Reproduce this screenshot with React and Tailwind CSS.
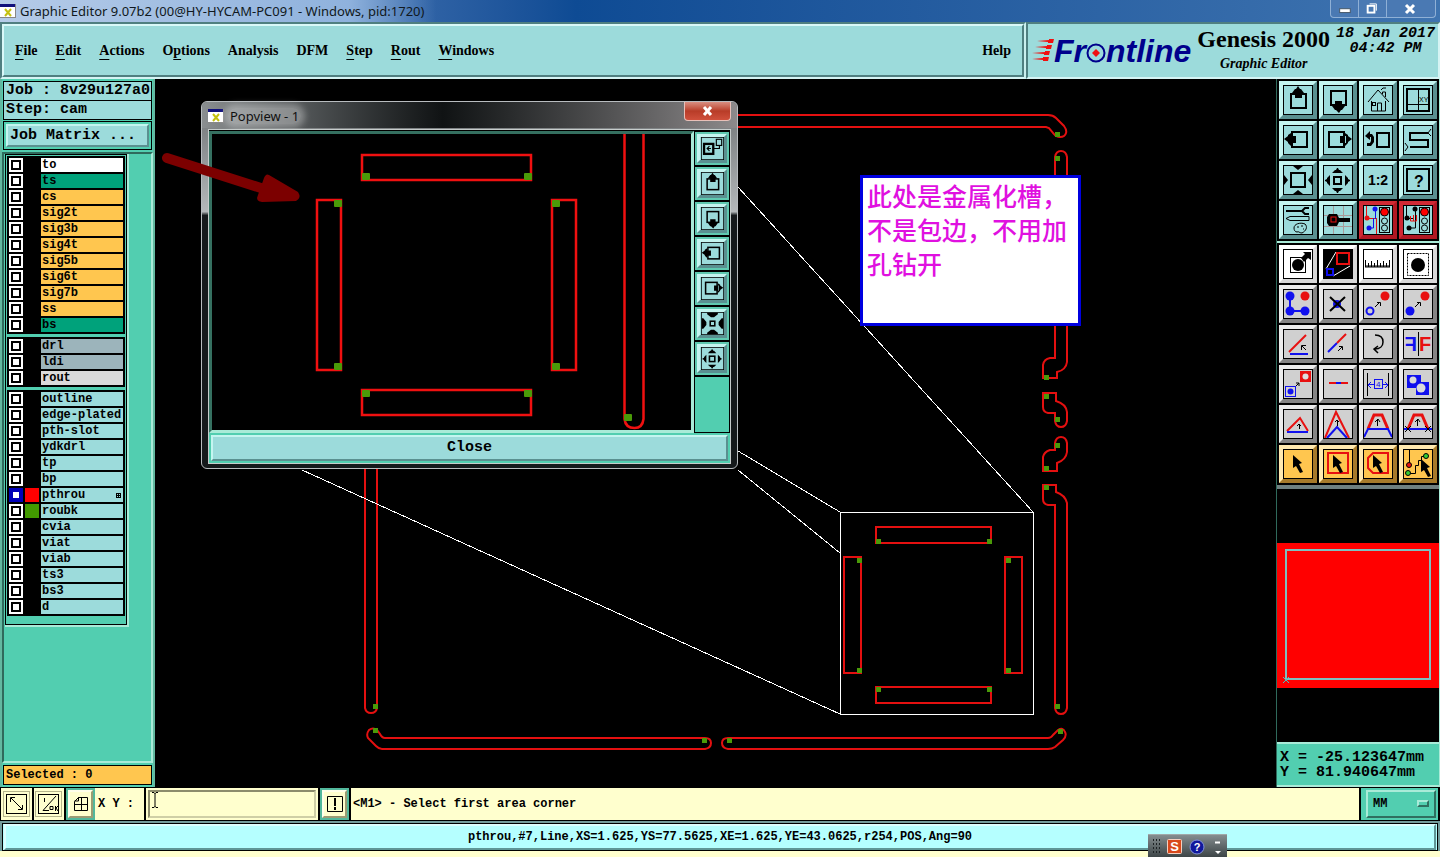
import React, { useState } from "react";

const MONO = "font-['Liberation_Mono',monospace] font-bold";
const SERIF = "font-['Liberation_Serif',serif] font-bold";
const SANS = "font-['Noto_Sans',sans-serif]";

const raisedAqua =
  "bg-[#9cdbdb] border-t-[#c4f5f0] border-l-[#c4f5f0] border-b-[#5a9090] border-r-[#5a9090]";
const raisedTeal =
  "bg-[#52ceb0] border-t-[#a9ebd8] border-l-[#a9ebd8] border-b-[#2f6f60] border-r-[#2f6f60]";

const menus = [
  ["", "F", "ile"],
  ["", "E", "dit"],
  ["", "A", "ctions"],
  ["O", "p", "tions"],
  ["Analysis", "", ""],
  ["DFM", "", ""],
  ["", "S", "tep"],
  ["", "R", "out"],
  ["", "W", "indows"],
];

const orange = "bg-[#ffc64f]";
const green = "bg-[#00a27b]";
const aqua = "bg-[#9cdbdb]";
const steel = "bg-[#9cb4bb]";

const layerGroups = [
  [
    { name: "to", color: "bg-white" },
    { name: "ts", color: green },
    { name: "cs", color: orange },
    { name: "sig2t", color: orange },
    { name: "sig3b", color: orange },
    { name: "sig4t", color: orange },
    { name: "sig5b", color: orange },
    { name: "sig6t", color: orange },
    { name: "sig7b", color: orange },
    { name: "ss", color: orange },
    { name: "bs", color: green },
  ],
  [
    { name: "drl", color: steel },
    { name: "ldi", color: steel },
    { name: "rout", color: "bg-[#dadada]" },
  ],
  [
    { name: "outline", color: aqua },
    { name: "edge-plated", color: aqua },
    { name: "pth-slot", color: aqua },
    { name: "ydkdrl", color: aqua },
    { name: "tp", color: aqua },
    { name: "bp", color: aqua },
    { name: "pthrou", color: aqua, swatch: "bg-[#ff0000]", active: true },
    { name: "roubk", color: aqua, swatch: "bg-[#429a00]" },
    { name: "cvia", color: aqua },
    { name: "viat", color: aqua },
    { name: "viab", color: aqua },
    { name: "ts3", color: aqua },
    { name: "bs3", color: aqua },
    { name: "d", color: aqua },
  ],
];

const RED = "#e81010";
const BLUE = "#1010ee";
const cursor = "10,6 19,14 16,15 20,23 17,24 13,17 10,19";

// every icon is drawn on a 30 x 30 grid
const icons = {
  up: (
    <>
      <rect x="8" y="9" width="15" height="14" fill="none" stroke="#000" strokeWidth="2" />
      <path d="M15 1l2 3h1l3 4H9l3-4h1zM12 7h7v6h-7z" />
    </>
  ),
  down: (
    <>
      <rect x="8" y="6" width="15" height="14" fill="none" stroke="#000" strokeWidth="2" />
      <path d="M12 16h7v6h-7zM9 21h13l-3 4h-1l-2 3-3-3h-1z" />
    </>
  ),
  left: (
    <>
      <rect x="9" y="7" width="15" height="15" fill="none" stroke="#000" strokeWidth="2" />
      <path d="M7 11h6v7H7zM8 8v13l-3-3v-1l-4-3 4-3v-1z" />
    </>
  ),
  right: (
    <>
      <rect x="6" y="7" width="15" height="15" fill="none" stroke="#000" strokeWidth="2" />
      <path d="M17 11h6v7h-6zM22 8v13l3-3v-1l4-3-4-3v-1z" />
    </>
  ),
  home: (
    <g fill="none" stroke="#000">
      <path d="M5 17L15 5l11 12M8.500 16v10h14V16M14.500 26v-8h4v8M19.500 9V7h3v5M18 5l2-2h3" />
      <rect x="9.500" y="17.500" width="3" height="3" />
    </g>
  ),
  coords: (
    <>
      <rect x="4" y="4" width="22" height="22" fill="none" stroke="#000" strokeWidth="2" />
      <path d="M15.500 3v24M3 19.500h24" fill="none" stroke="#000" />
      <text x="16" y="17" fontSize="7" fontFamily="Liberation Sans, sans-serif">XY</text>
    </>
  ),
  undo: (
    <>
      <rect x="14" y="8" width="12" height="14" fill="none" stroke="#000" strokeWidth="2" />
      <path d="M2 11l5-5v3h2l2 3v5l-3 4H4v-3h3l1-2v-4H7v3z" />
    </>
  ),
  serpentine: (
    <g fill="none" stroke="#000">
      <path d="M25 8H7v7h18v7H7" strokeWidth="2" />
      <path d="M28 4l-3 4 3 3M2 18l3 4-3 4" />
    </g>
  ),
  fit: (
    <>
      <rect x="8" y="8" width="14" height="14" fill="none" stroke="#000" strokeWidth="2" />
      <path d="M10 1h10l-5 4zM10 29h10l-5-4zM1 10v10l4-5zM29 10v10l-4-5z" />
    </>
  ),
  zoomOut: (
    <>
      <rect x="11" y="12" width="7" height="7" fill="none" stroke="#000" strokeWidth="2" />
      <path d="M9 8h11l-3-3h-1l-1-2h-1l-1 2h-1zM9 23h11l-3 3h-1l-1 2h-1l-1-2h-1zM7 10v11l-3-3v-1l-2-1v-1l2-1v-1zM22 10v11l3-3v-1l2-1v-1l-2-1v-1z" />
    </>
  ),
  zoomIn: (
    <>
      <rect x="12" y="12" width="6" height="6" fill="none" stroke="#000" strokeWidth="2" />
      <path d="M8 1h14v2l-5 4h-4L8 3zM8 29h14v-2l-5-4h-4l-5 4zM1 8v14h2l4-5v-4L3 8zM29 8v14h-2l-4-5v-4l4-5z" />
    </>
  ),
  ratio: (
    <text x="15" y="20" textAnchor="middle" fontSize="14" fontWeight="bold" fontFamily="Liberation Sans, sans-serif">
      1:2
    </text>
  ),
  help: (
    <>
      <rect x="4" y="4" width="22" height="22" fill="none" stroke="#000" strokeWidth="2" />
      <text x="16" y="22" textAnchor="middle" fontSize="16" fontWeight="bold" fontFamily="Liberation Sans, sans-serif">
        ?
      </text>
    </>
  ),
  tools: (
    <g fill="none" stroke="#000">
      <path d="M3 6h16" strokeWidth="2" />
      <path d="M26 3h-4l-3 3 3 3h4" strokeWidth="2" />
      <path d="M3 13.500l4-2h19v4H7z" />
      <path d="M11 23c0-4 6-6 11-4 3 3 1 7-3 9-3 0-3-2-5-1-2 0-3-2-3-4zM14 22h2M18 21h2M20 24h1" />
    </g>
  ),
  probe: (
    <>
      <path d="M10.500 1v28M20.500 1v28M1 10.500h28M1 21.500h28" stroke="#a99" fill="none" />
      <path d="M6 9h8l2 4h11v4H16l-2 4H6l-2-3v-6z" />
      <rect x="8" y="12" width="5" height="5" fill="none" stroke={RED} strokeWidth="1" />
    </>
  ),
  netColor: (
    <>
      <path d="M3.500 1v12M3 13.500h10M13.500 13v16" fill="none" stroke={RED} />
      <path d="M12.500 4v10M10.500 13v10H6" fill="none" stroke={BLUE} />
      <circle cx="4" cy="13" r="2.500" fill={RED} />
      <circle cx="12" cy="4" r="2.500" fill={BLUE} />
      <circle cx="6" cy="23" r="2.500" fill={BLUE} />
      <rect x="16.500" y="2.500" width="10" height="25" fill="none" stroke="#000" />
      <circle cx="21.500" cy="7" r="4" fill="#f00" stroke="#000" />
      <circle cx="21.500" cy="16" r="3" fill="none" stroke="#000" />
      <circle cx="21.500" cy="23" r="3" fill="none" stroke="#000" />
    </>
  ),
  netMono: (
    <>
      <path d="M3.500 1v12M12.500 4v19H6M4 13.500h6" fill="none" stroke="#000" />
      <path d="M7.500 11v5h6M7.500 11.500v2M10.500 10v6M13.500 10v6" fill="none" stroke={RED} />
      <circle cx="4" cy="13" r="2.500" />
      <circle cx="12" cy="4" r="2.500" />
      <circle cx="6" cy="23" r="2.500" />
      <rect x="16.500" y="2.500" width="10" height="25" fill="none" stroke="#000" />
      <circle cx="21.500" cy="7" r="4" fill="#f00" stroke="#000" />
      <circle cx="21.500" cy="16" r="3" fill="none" stroke="#000" />
      <circle cx="21.500" cy="23" r="3" fill="none" stroke="#000" />
    </>
  ),
  padOut: (
    <>
      <rect x="7.500" y="8.500" width="15" height="15" fill="none" stroke="#000" />
      <circle cx="15" cy="16" r="6" />
      <path d="M18 9l4-4-2-2h8v8l-3-2-4 4z" />
    </>
  ),
  pan: (
    <>
      <rect width="30" height="30" />
      <path d="M3 20L13 3M10 27l17-10" stroke="#fff" fill="none" />
      <rect x="14" y="4" width="12" height="11" fill="none" stroke={RED} strokeWidth="2" />
      <rect x="4" y="20" width="6" height="6" fill="none" stroke={BLUE} strokeWidth="2" />
    </>
  ),
  ruler: (
    <path d="M2.500 11v7M5.500 14v4M8.500 12v6M11.500 14v4M14.500 11v7M17.500 14v4M20.500 12v6M23.500 14v4M26.500 11v7M2 17h25M2 18h25" fill="none" stroke="#000" />
  ),
  padSelect: (
    <>
      <rect x="4.500" y="4.500" width="21" height="22" fill="none" stroke="#000" strokeDasharray="2 1" />
      <circle cx="15" cy="16" r="7" />
    </>
  ),
  chain: (
    <>
      <path d="M7 7v15h15" stroke={BLUE} strokeWidth="2" fill="none" />
      <circle cx="7" cy="7" r="4.500" fill={BLUE} />
      <circle cx="7" cy="22" r="4.500" fill={BLUE} />
      <circle cx="22" cy="22" r="4.500" fill={BLUE} />
      <circle cx="22" cy="7" r="4.500" fill={RED} />
    </>
  ),
  remove: (
    <>
      <circle cx="14" cy="15" r="4" fill={BLUE} />
      <path d="M7 8l15 14M22 8L7 22" stroke="#000" strokeWidth="2" fill="none" />
    </>
  ),
  moveTo: (
    <>
      <circle cx="22" cy="7" r="4.500" fill={RED} />
      <circle cx="7" cy="22" r="3.500" fill="none" stroke={BLUE} strokeWidth="2" />
      <path d="M12 18l5-5M14 13.500h3.500v3.500" stroke="#000" fill="none" />
    </>
  ),
  copyTo: (
    <>
      <circle cx="22" cy="7" r="4.500" fill={RED} />
      <circle cx="7" cy="22" r="4.500" fill={BLUE} />
      <path d="M12 18l5-5M14 13.500h3.500v3.500" stroke="#000" fill="none" />
    </>
  ),
  angle: (
    <>
      <path d="M7 25h18" stroke={BLUE} strokeWidth="2" fill="none" />
      <path d="M6 23L23 6" stroke={RED} strokeWidth="2" fill="none" />
      <path d="M19 17l4 4M18.500 21v-4.500h4.500" stroke="#000" fill="none" />
    </>
  ),
  lineEdit: (
    <>
      <path d="M5 23l9-9" stroke={BLUE} strokeWidth="2" fill="none" />
      <path d="M14 14l9-9" stroke={RED} strokeWidth="2" fill="none" />
      <path d="M15 22l4-4M16 17.500h3.500v3.500" stroke="#000" fill="none" />
    </>
  ),
  rotate: (
    <path d="M12 6c6 0 8 3 8 7s-3 7-8 7M15 17l-4 3 4 4" stroke="#000" strokeWidth="1.500" fill="none" />
  ),
  mirror: (
    <>
      <path d="M15.500 3v24" stroke="#000" fill="none" />
      <g fontFamily="Liberation Sans, sans-serif" fontSize="20" fontWeight="bold">
        <text x="16" y="22" fill={RED}>F</text>
        <text x="-14" y="22" fill={BLUE} transform="scale(-1 1)">F</text>
      </g>
    </>
  ),
  swap: (
    <>
      <rect x="2.500" y="17.500" width="10" height="10" fill="none" stroke={BLUE} />
      <circle cx="7.500" cy="22.500" r="3" fill={BLUE} />
      <rect x="17" y="2" width="11" height="11" fill={RED} />
      <circle cx="22.500" cy="7.500" r="3" fill="#ddd" />
      <path d="M13 17l3-3M13 14h3v3" stroke="#000" fill="none" />
    </>
  ),
  segment: (
    <>
      <path d="M6 14h19" stroke={RED} strokeWidth="2" fill="none" />
      <path d="M13 14h5" stroke={BLUE} strokeWidth="2" fill="none" />
    </>
  ),
  spacing: (
    <>
      <path d="M4.500 4v23M25.500 4v23" stroke="#000" fill="none" />
      <path d="M5 15.500h6M19 15.500h6M8 13l-3 3 3 3M22 13l3 3-3 3" stroke={BLUE} fill="none" />
      <rect x="11.500" y="10.500" width="8" height="9" fill="none" stroke={BLUE} />
      <text x="13" y="18" fontSize="8" fill={BLUE} fontFamily="Liberation Sans, sans-serif">4</text>
    </>
  ),
  polarity: (
    <>
      <path d="M4 6h14v7h8v13H13v-7H4z" fill={BLUE} />
      <circle cx="10" cy="11" r="3.500" fill="#dadada" />
      <circle cx="18" cy="19" r="4.500" fill="#dadada" />
    </>
  ),
  triangle: (
    <>
      <path d="M4 22L17 9l8 13" stroke={RED} strokeWidth="2" fill="none" />
      <path d="M4 23h21" stroke={BLUE} strokeWidth="2" fill="none" />
      <path d="M16.500 20v-5M14 17l2-2 2 2" stroke="#000" fill="none" />
    </>
  ),
  peak: (
    <>
      <path d="M2 29L13 3l13 26" stroke={RED} strokeWidth="2" fill="none" />
      <path d="M4 29l10-11 10 11" stroke={BLUE} strokeWidth="2" fill="none" />
      <path d="M14.500 17v-6M12 13l2-2 2 2" stroke="#000" fill="none" />
    </>
  ),
  trapezoid: (
    <>
      <path d="M5 20l6-14h8l6 14" stroke={RED} strokeWidth="3" fill="none" />
      <path d="M1 28l4-8h20l4 8" stroke={BLUE} strokeWidth="2" fill="none" />
      <path d="M14.500 17v-7M12 13l3-3 2 3" stroke="#000" fill="none" />
    </>
  ),
  trapezoidCut: (
    <>
      <path d="M5 20l6-14h8l6 14" stroke={RED} strokeWidth="3" fill="none" />
      <path d="M1 20h28" stroke={BLUE} strokeWidth="2" fill="none" />
      <path d="M14.500 17v-7M12 13l3-3 2 3M2 17l6 6M8 17l-6 6M22 17l6 6M28 17l-6 6" stroke="#000" fill="none" />
    </>
  ),
  pick: <polygon points={cursor} />,
  pickRect: (
    <>
      <rect x="5" y="4" width="20" height="20" fill="none" stroke={RED} strokeWidth="2" />
      <polygon points={cursor} />
    </>
  ),
  pickPoly: (
    <>
      <path d="M10 4h15v20H10l-5-5V9z" fill="none" stroke={RED} strokeWidth="2" />
      <polygon points={cursor} />
    </>
  ),
  pickNet: (
    <>
      <path d="M6.500 1v15M5 24.500h7.500v-8h3v-5h3V7.500h5" fill="none" stroke="#000" />
      <circle cx="6" cy="16" r="2.500" fill={RED} stroke="#000" />
      <circle cx="5" cy="24" r="2.500" fill="#3c3" stroke="#000" />
      <circle cx="23" cy="7" r="2.500" fill="#3c3" stroke="#000" />
      <polygon points={cursor} transform="translate(8 4)" />
    </>
  ),
  popOut: (
    <g fill="none" stroke="#000">
      <rect x="4" y="9" width="12" height="13" strokeWidth="3" />
      <rect x="20" y="3" width="7" height="8" strokeWidth="1.500" />
      <path d="M16 15h8v-4M13 15H8M11 12l-3 3 3 3" strokeWidth="1.500" />
    </g>
  ),
};

const viewTools = [
  "up", "down", "home", "coords",
  "left", "right", "undo", "serpentine",
  "fit", "zoomOut", "ratio", "help",
  "tools", "probe", "netColor", "netMono",
];

const editTools = [
  "padOut", "pan", "ruler", "padSelect",
  "chain", "remove", "moveTo", "copyTo",
  "angle", "lineEdit", "rotate", "mirror",
  "swap", "segment", "spacing", "polarity",
  "triangle", "peak", "trapezoid", "trapezoidCut",
  "pick", "pickRect", "pickPoly", "pickNet",
];

const popTools = ["popOut", "up", "down", "left", "right", "zoomIn", "zoomOut"];

const toneOf = (name, index, edit) => {
  if (!edit) {
    return name.startsWith("net")
      ? "bg-[#9cdbdb] border-[#b01822] border-t-[#d02a34] border-l-[#d02a34]"
      : raisedAqua;
  }
  if (index < 4) return "bg-white border-white border-b-[#d8d8d8] border-r-[#d8d8d8]";
  if (index > 19)
    return "bg-[#ffc64f] border-t-[#ffe9b0] border-l-[#ffe9b0] border-b-[#a67a2a] border-r-[#a67a2a]";
  return "bg-[#d0d0d0] border-t-[#ececec] border-l-[#ececec] border-b-[#858585] border-r-[#858585]";
};

const Icon = ({ name }) => (
  <svg viewBox="0 0 30 30" className="block size-full">
    {icons[name]}
    <rect x="0.500" y="0.500" width="29" height="29" fill="none" stroke="#000" />
  </svg>
);

const ToolGrid = ({ tools, edit }) => (
  <div className="grid grid-cols-4 gap-[2px] bg-black p-[2px]">
    {tools.map((name, i) => (
      <button key={name} aria-label={name} className={`h-[38px] border-4 ${toneOf(name, i, edit)}`}>
        <Icon name={name} />
      </button>
    ))}
  </div>
);

const AppIcon = () => (
  <svg viewBox="0 0 16 14" className="h-[14px] w-4 shrink-0">
    <rect width="16" height="14" fill="#888" />
    <rect width="15" height="13" fill="#fff" />
    <rect width="15" height="3" fill="#10107c" />
    <path d="M5 5l6 7M11 5l-6 7" stroke="#c4c010" strokeWidth="2" />
  </svg>
);

const TitleBar = () => (
  <header className="relative flex h-[22px] items-center bg-linear-to-r from-[#7fa5d4] via-[#0e4b94] via-40% to-[#3f74b0]">
    <div className="flex h-full items-center gap-1 bg-linear-to-r from-[#b5cbe8] via-[#8fb2dd] via-80% to-transparent pr-3">
      <AppIcon />
      <span className={`${SANS} text-[13px] leading-5 whitespace-nowrap text-[#101820]`}>
        Graphic Editor 9.07b2 (00@HY-HYCAM-PC091 - Windows, pid:1720)
      </span>
    </div>
    <div className="mr-1 mb-1 ml-auto flex h-[18px] rounded-b border border-t-0 border-[#8fb0d6] bg-[#4a79b3]">
      <button aria-label="Minimize" className="w-7 border-r border-[#8fb0d6]">
        <svg viewBox="0 0 28 16" className="block"><rect x="9" y="8" width="11" height="4" fill="#fff" stroke="#456" /></svg>
      </button>
      <button aria-label="Restore" className="w-7 border-r border-[#8fb0d6]">
        <svg viewBox="0 0 28 16" className="block" fill="none" stroke="#fff" strokeWidth="2">
          <path d="M11 3h7v7" strokeWidth="1" />
          <rect x="9" y="5" width="7" height="7" />
        </svg>
      </button>
      <button aria-label="Close" className="w-12">
        <svg viewBox="0 0 48 16" className="block" stroke="#fff" strokeWidth="3">
          <path d="M19 4l8 8M27 4l-8 8" />
        </svg>
      </button>
    </div>
  </header>
);

const MenuBar = () => (
  <nav className="flex h-[57px] min-w-0 flex-1 border-2 border-t-[#4f7f80] border-r-[#c9efee] border-b-[#d5f4f4] border-l-[#4f7f80] bg-[#9cdbdb]">
    <div className={`${SERIF} flex flex-1 items-center gap-[18px] border-2 border-t-[#d9f8f8] border-r-[#4f7f80] border-b-[#4f7f80] border-l-[#d9f8f8] px-[11px] text-[14px] text-black`}>
      {menus.map(([before, key, after]) => (
        <button key={before + key + after}>
          {before}
          <span className="underline underline-offset-4">{key}</span>
          {after}
        </button>
      ))}
      <button className="ml-auto">Help</button>
    </div>
  </nav>
);

const Logo = () => (
  <div className="flex items-center">
    <svg viewBox="0 0 22 26" className="h-[26px] w-[22px]" fill="#f01010">
      <path d="M5 3l12-1v-1h5l-1 4h-5V4zM3 9l12-1V7h5l-1 4h-5v-1zM0 15l13-1v-1h5l-1 4h-5v-1zM0 21l11-1v-1h6l-1 4h-5v-1z" />
    </svg>
    <span className="flex items-center font-['Liberation_Sans',sans-serif] text-[32px] leading-8 font-bold text-[#00008c] italic">
      Fr
      <svg viewBox="0 0 20 20" className="mt-1 size-5">
        <circle cx="10" cy="10" r="8.500" fill="none" stroke="#00008c" strokeWidth="2" />
        <path d="M10 6l4 4-4 4-4-4z" fill="#f01010" />
      </svg>
      ntline
    </span>
  </div>
);

const Brand = () => (
  <div className="flex h-[57px] w-[414px] shrink-0 border-2 border-t-[#4f7f80] border-r-[#d5f4f4] border-b-[#d5f4f4] border-l-[#4f7f80] bg-[#9cdbdb] pl-1 text-black">
    <Logo />
    <div className={`${SERIF} ml-[6px] flex shrink-0 flex-col items-center`}>
      <span className="text-[24px] leading-[30px]">Genesis 2000</span>
      <span className="text-[14px] leading-5 italic">Graphic Editor</span>
    </div>
    <div className={`${MONO} ml-[6px] pt-[2px] text-center text-[15px] leading-[15px] whitespace-nowrap italic`}>
      18 Jan 2017
      <br />
      04:42 PM
    </div>
  </div>
);

const LayerRow = ({ layer }) => {
  const [shown, setShown] = useState(!!layer.active);
  return (
    <div className="flex h-[14px] gap-[2px]">
      <input
        type="checkbox"
        id={`layer-${layer.name}`}
        checked={shown}
        onChange={(e) => setShown(e.target.checked)}
        className="size-[14px] shrink-0 appearance-none border-2 border-white bg-white shadow-[inset_0_0_0_2px_#000] checked:border-[#0000b8] checked:shadow-[inset_0_0_0_2px_#0000b8]"
      />
      <span className={`size-[14px] shrink-0 ${layer.swatch || "bg-black"}`} />
      <label
        htmlFor={`layer-${layer.name}`}
        className={`${MONO} flex min-w-0 flex-1 items-center justify-between pl-px text-[12px] leading-[14px] text-black ${layer.color}`}
      >
        {layer.name}
        {layer.active && (
          <svg viewBox="0 0 5 5" className="mr-[2px] size-[5px]" shapeRendering="crispEdges">
            <path d="M.5.5h4v4h-4zM2.500 0v5M0 2.500h5" fill="none" stroke="#000" />
          </svg>
        )}
      </label>
    </div>
  );
};

const LayerPanel = () => (
  <aside className="flex w-[155px] shrink-0 flex-col border-x-2 border-x-[#62b8a0] bg-[#52ceb0] pt-[2px] text-black">
    <div className={`${MONO} mx-px border border-black bg-[#9cdbdb] pl-[2px] text-[15px] leading-[18px] whitespace-nowrap`}>
      Job : 8v29u127a0
    </div>
    <div className={`${MONO} mx-px border border-t-0 border-black bg-[#9cdbdb] pl-[2px] text-[15px] leading-[18px]`}>
      Step: cam
    </div>
    <div className="mx-px mt-px border border-black p-[2px]">
      <button className={`${MONO} block h-[23px] w-full border-2 pl-[2px] text-left text-[15px] leading-[18px] ${raisedAqua}`}>
        Job Matrix ...
      </button>
    </div>
    <div className="mt-[2px] flex-1 border-2 border-t-[#2f6a5c] border-r-[#a9ebd8] border-b-[#a9ebd8] border-l-[#2f6a5c]">
      <div className="ml-px w-[124px] border-r-2 border-b-2 border-[#a9ebd8]">
        <div className="flex flex-col gap-[3px] border border-black px-px pt-px pb-2">
          {layerGroups.map((group) => (
            <div key={group[0].name} className="flex flex-col gap-[2px] bg-black p-[2px]">
              {group.map((layer) => (
                <LayerRow key={layer.name} layer={layer} />
              ))}
            </div>
          ))}
        </div>
      </div>
    </div>
    <div className={`${MONO} mx-px my-[2px] border border-black bg-[#ffc64f] pl-[2px] text-[12px] leading-[18px]`}>
      Selected : 0
    </div>
  </aside>
);

const pads = [
  [1057, 134], [1057, 158], [1046, 377], [1046, 396], [1057, 419], [1057, 445],
  [1046, 468], [1046, 487], [1057, 706], [1060, 731], [729, 740], [704, 740],
  [375, 730], [375, 706], [878, 541], [989, 541], [859, 560], [859, 670],
  [1008, 560], [1008, 670], [878, 689], [989, 689],
];

const Board = () => (
  <svg width="1122" height="708" viewBox="155 79 1122 708" className="block max-w-none" fill="none">
    <g stroke="#e41010" strokeWidth="2">
      <path d="M382 115H1048q5 0 8 3l8 8q3 4 2 7-1 4-6 4-4 0-6-3l-5-6-3-1H382q-4 0-7 4l-5 5q-5 2-5-4 0-4 4-7l5-6q4-4 8-4z" />
      <path d="M1055 157q1-6 6-6t6 6V362q-1 8-10 10v6h-14v-13q1-6 7-7h5z" />
      <path d="M1043 393h13v8q10 3 11 11v9q-1 6-6 6t-6-6v-8h-7q-5-1-5-6z" />
      <path d="M1055 443q1-6 6-6t6 6v9q-1 8-10 11v8h-14v-14q1-5 7-7h5z" />
      <path d="M1043 485h13v7q9 3 11 11V708q-1 6-6 6t-6-6V505h-7q-5-1-5-6z" />
      <path d="M728 738H1048q3 0 5-3l5-5q5-3 7 2 2 4-2 8l-8 7q-3 2-7 2H728q-6-1-6-6t6-5z" />
      <path d="M705 738H385q-3 0-5-4l-3-4q-4-3-8 0-3 4-1 8l8 8q3 3 6 3H705q6-1 6-6t-6-5z" />
      <path d="M365 400V708q1 5 6 5t6-5V400" />
      <path d="M876 527h115v16H876zM876 687h115v16H876zM844 557h17v116h-17zM1005 557h17v116h-17z" />
    </g>
    {pads.map(([x, y]) => (
      <rect key={`${x}-${y}`} x={x - 2} y={y - 2} width="5" height="5" fill="#4a9a08" />
    ))}
    <g stroke="#fff" shapeRendering="crispEdges">
      <path d="M840.500 512.500h193v202h-193z" />
      <path d="M738 187L1033 512M738 451L840 512M738 470L840 553M302 470L840 714" />
    </g>
  </svg>
);

const popPads = [
  [362, 173], [524, 173], [334, 200], [552, 200], [334, 363],
  [552, 363], [362, 390], [524, 390], [624, 414],
];

const PopView = () => (
  <section className="absolute top-[22px] left-[46px] flex w-[537px] flex-col rounded-md border border-[#b8bcbf] bg-linear-to-b from-[#6f7375] via-[#b4b8ba] via-30% to-[#15191b] to-31% px-[6px] pb-1">
    <div className="absolute inset-x-0 top-0 h-[26px] rounded-t-md bg-linear-to-r from-[#8a8e90] via-[#101314] via-45% to-[#8d8a8b]" />
    <div className="relative flex h-[27px] items-center gap-1">
      <AppIcon />
      <span className={`${SANS} rounded-full bg-white/30 px-[2px] text-[13px] leading-4 text-[#101010] shadow-[0_0_6px_4px_rgba(255,255,255,0.3)]`}>
        Popview - 1
      </span>
      <button
        aria-label="Close window"
        className="mb-auto ml-auto h-[19px] w-[47px] rounded-b border border-t-0 border-[#e8c0b8] bg-linear-to-b from-[#d88e80] via-[#b83c28] to-[#d0503c]"
      >
        <svg viewBox="0 0 45 18" className="block" stroke="#fff" strokeWidth="3">
          <path d="M19 5l7 8M26 5l-7 8" />
        </svg>
      </button>
    </div>
    <div className="relative border border-[#c6cccb] bg-black">
      <div className="flex pt-px">
        <div className="flex-1 border-3 border-t-[#357060] border-r-[#a9ebd8] border-b-[#a9ebd8] border-l-[#357060] bg-black">
          <svg viewBox="212 134 479 296" className="block w-full" fill="none">
            <g stroke="#f01010" strokeWidth="2.500">
              <rect x="362" y="155" width="169" height="25" />
              <rect x="362" y="390" width="169" height="25" />
              <rect x="317" y="200" width="24" height="170" />
              <rect x="552" y="200" width="24" height="170" />
              <path d="M624.500 134V419q1 9 10 9 8 0 9-9V134" />
            </g>
            {popPads.map(([x, y]) => (
              <rect key={`${x}-${y}`} x={x} y={y} width="8" height="7" rx="1" fill="#4a9a08" />
            ))}
          </svg>
        </div>
        <div className="flex w-9 flex-col gap-[2px] border border-black bg-black">
          {popTools.map((name) => (
            <button key={name} aria-label={`pan ${name}`} className="h-[33px] border-2 border-[#5fc9b0]">
              <span className={`block h-[29px] border-3 ${raisedAqua}`}>
                <span className="mx-auto block size-[23px]">
                  <Icon name={name} />
                </span>
              </span>
            </button>
          ))}
          <div className="flex-1 bg-[#52ceb0]" />
        </div>
      </div>
      <div className="border-2 border-[#52ceb0]">
        <button className={`${MONO} block h-[26px] w-full border-2 text-[15px] leading-5 text-black ${raisedAqua}`}>
          Close
        </button>
      </div>
    </div>
  </section>
);

const Canvas = () => (
  <main className="relative h-[708px] min-w-0 flex-1 overflow-hidden bg-black">
    <Board />
    <PopView />
    <svg viewBox="160 148 144 58" className="absolute top-[69px] left-[5px] h-[58px] w-36">
      <path d="M167 158L264 189" stroke="#7c0000" strokeWidth="10" strokeLinecap="round" />
      <path d="M269 175l29 17q4 6-2 9l-34 1q-7-1-4-7l6-17q2-5 5-3z" fill="#7c0000" />
    </svg>
    <p className="absolute top-24 left-[705px] h-[151px] w-[221px] border-[3px] border-[#0000e0] bg-white pl-1 font-['Noto_Sans_CJK_SC',sans-serif] text-[25px] leading-[34px] font-medium whitespace-nowrap text-[#e010e0]">
      此处是金属化槽，
      <br />
      不是包边，不用加
      <br />
      孔钻开
    </p>
  </main>
);

const ToolPanel = () => (
  <aside className="flex w-[164px] shrink-0 flex-col border-x border-r-[#a9ebd8] border-l-[#2f6a5c] bg-black">
    <div className="border-b-2 border-[#a9ebd8]">
      <ToolGrid tools={viewTools} />
    </div>
    <div className="border-b-4 border-[#6f8080]">
      <ToolGrid tools={editTools} edit />
    </div>
    <div className="flex flex-1 flex-col justify-center border-b-2 border-[#a9ebd8]">
      <div className="relative h-[145px] bg-[#ff0000] p-2 pt-[6px]">
        <div className="h-full border-2 border-[#7fc0c0]" />
        <svg viewBox="0 0 8 8" className="absolute bottom-1 left-[5px] size-2" stroke="#40c8c8">
          <path d="M1 1l6 6M7 1L1 7" />
        </svg>
      </div>
    </div>
    <div className={`${MONO} h-[43px] border-b-2 border-[#a9ebd8] bg-[#52ceb0] pt-[6px] pl-[3px] text-[15px] leading-[15px] whitespace-nowrap text-black`}>
      X = -25.123647mm
      <br />Y = 81.940647mm
    </div>
  </aside>
);

const cream =
  "border-2 border-t-[#ffffea] border-l-[#ffffea] border-b-[#9c9c74] border-r-[#9c9c74] bg-[#ffffce]";

const CommandBar = () => {
  const [coords, setCoords] = useState("");
  return (
    <div className={`${MONO} flex h-[34px] gap-[2px] border-y border-black bg-black pr-[2px] pl-px text-[12px] text-black`}>
      <button aria-label="Snap" className="w-[31px] shrink-0 bg-[#ffffce]">
        <svg viewBox="0 0 31 32" className="block" fill="none" stroke="#000">
          <rect x="2.500" y="3.500" width="26" height="25" stroke="#b5b58c" />
          <rect x="5.500" y="6.500" width="20" height="19" />
          <path d="M10 10l11 11M9.500 14V9.500H14M21.500 17v4.500H17" />
        </svg>
      </button>
      <button aria-label="Snap off" className="w-[30px] shrink-0 bg-[#ffffce]">
        <svg viewBox="0 0 30 32" className="block" fill="none" stroke="#000">
          <rect x="1.500" y="3.500" width="26" height="25" stroke="#b5b58c" />
          <rect x="4.500" y="6.500" width="20" height="19" />
          <path d="M22 8L9 22.500h6M10.500 10v4M16 18.500h3v3h-3zM21.500 18v5M24 18l-2 2 2 3" />
        </svg>
      </button>
      <button aria-label="Grid" className="w-[29px] shrink-0 border-2 border-[#52b89c] bg-[#ffffce]">
        <span className={`flex h-full items-center justify-center ${cream}`}>
          <svg viewBox="0 0 16 16" className="size-4" fill="none" stroke="#000">
            <path d="M1.500 5.500l4-4h9v13h-13zM8.500 1v14M1 8.500h14M5.500 1v4h-4" />
          </svg>
        </span>
      </button>
      <label htmlFor="xy" className="-ml-[2px] flex w-[49px] shrink-0 items-center bg-[#ffffce] pl-[3px] whitespace-pre">
        X Y :
      </label>
      <div className="relative w-[172px] shrink-0 bg-[#ffffce] p-[2px]">
        <input
          id="xy"
          value={coords}
          onChange={(e) => setCoords(e.target.value)}
          className="h-full w-full border-2 border-t-[#8c8c6c] border-r-[#cfcfa6] border-b-[#cfcfa6] border-l-[#8c8c6c] bg-[#ffffce] px-1"
        />
        <svg viewBox="0 0 6 16" className="absolute top-1 left-[6px] h-4 w-[6px]" fill="none" stroke="#000">
          <path d="M0 .5h2l1 1 1-1h2M3 1v14M0 15.500h2l1-1 1 1h2" />
        </svg>
      </div>
      <button aria-label="Alert" className="w-[29px] shrink-0 border-2 border-[#52b89c] bg-[#ffffce]">
        <span className={`flex h-full items-center justify-center ${cream}`}>
          <svg viewBox="0 0 16 18" className="h-[18px] w-4" fill="none" stroke="#000">
            <path d="M.5 1.500h15v15H.5z" />
            <path d="M8 3v8M8 12v3" strokeWidth="2" />
          </svg>
        </span>
      </button>
      <div className="flex min-w-0 flex-1 items-center truncate bg-[#ffffce] pl-[2px]">
        &lt;M1&gt; - Select first area corner
      </div>
      <div className="relative w-[77px] shrink-0 bg-[#52ceb0] py-[2px] pr-[2px] pl-[5px]">
        <select aria-label="Units" className={`h-full w-full appearance-none border-2 pl-[5px] ${raisedTeal}`}>
          <option>MM</option>
          <option>INCH</option>
        </select>
        <span className={`pointer-events-none absolute top-3 right-[9px] h-[7px] w-3 border-2 ${raisedTeal}`} />
      </div>
    </div>
  );
};

const LanguageBar = () => (
  <div className="absolute right-[213px] bottom-0 flex h-[23px] w-[79px] items-center border-t border-[#a0a8a8] bg-linear-to-b from-[#858d8f] to-[#3e4648] pl-1">
    <svg viewBox="0 0 75 22" className="block w-full">
      <path d="M1 5h9M1 9h9M1 13h9M1 17h9" stroke="#1d2224" strokeWidth="2" strokeDasharray="1 2" />
      <rect x="15.500" y="4.500" width="14" height="14" rx="1" fill="#d8481c" stroke="#f4d0c0" />
      <circle cx="45" cy="12" r="7" fill="#10189c" stroke="#8090d8" />
      <path d="M63 7.500h5" stroke="#fff" strokeWidth="2" />
      <path d="M63 16h6l-3 3z" fill="#fff" />
      <g fill="#fff" textAnchor="middle" fontWeight="bold" fontFamily="Liberation Sans, sans-serif">
        <text x="22.500" y="16" fontSize="13">S</text>
        <text x="45" y="16" fontSize="11">?</text>
      </g>
    </svg>
  </div>
);

const App = () => {
  return (
    <div className="relative flex min-h-screen flex-col bg-[#ffffce]">
      <TitleBar />
      <div className="flex">
        <MenuBar />
        <Brand />
      </div>
      <div className="flex">
        <LayerPanel />
        <Canvas />
        <ToolPanel />
      </div>
      <CommandBar />
      <footer className="border-x-2 border-t-2 border-[#739c9c] bg-[#b5ffff]">
        <div className="border border-black">
          <div className={`${MONO} mx-px border-2 border-t-[#dcffff] border-r-[#5f9696] border-b-[#5f9696] border-l-[#dcffff] text-center text-[12px] leading-[22px] text-black`}>
            pthrou,#7,Line,XS=1.625,YS=77.5625,XE=1.625,YE=43.0625,r254,POS,Ang=90
          </div>
        </div>
      </footer>
      <LanguageBar />
    </div>
  );
};

export default App;
